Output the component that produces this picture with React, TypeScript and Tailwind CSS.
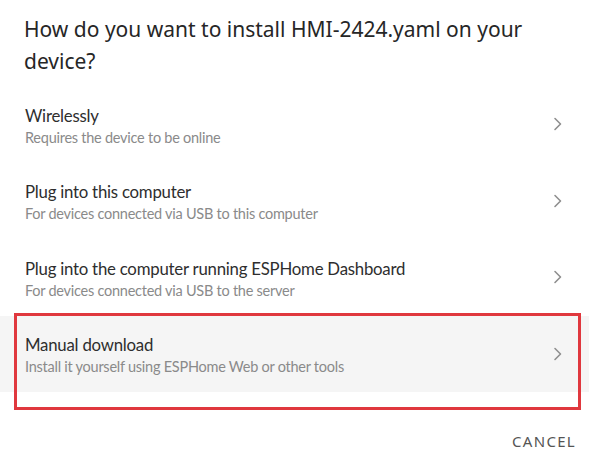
import React from "react";

const rows = [
  { title: "Wirelessly", sub: "Requires the device to be online" },
  { title: "Plug into this computer", sub: "For devices connected via USB to this computer" },
  { title: "Plug into the computer running ESPHome Dashboard", sub: "For devices connected via USB to the server" },
  { title: "Manual download", sub: "Install it yourself using ESPHome Web or other tools", active: true },
];

function Chevron() {
  return (
    <svg width="10" height="14" viewBox="0 0 10 14" className="shrink-0">
      <path d="M2 1.5 L7.5 7 L2 12.5" fill="none" stroke="#8f8f8f" strokeWidth="1.6" strokeLinecap="round" strokeLinejoin="round" />
    </svg>
  );
}

export default function App() {
  return (
    <div
      className="relative w-[589px] h-[468px] bg-white overflow-hidden"
      style={{ fontFamily: '"Noto Sans", "Open Sans", sans-serif' }}
    >
      <h2 className="pl-[24px] pr-[24px] pt-[13px] text-[21px] leading-[32px] text-[#262626] font-normal">
        How do you want to install HMI-2424.yaml on your device?
      </h2>
      <ul className="mt-[9px]" style={{ fontFamily: 'Lato, "Noto Sans", sans-serif' }}>
        {rows.map((r) => (
          <li
            key={r.title}
            className={`flex items-center justify-between h-[76.5px] pl-[25px] pr-[26px] ${r.active ? "bg-[#f5f5f5]" : ""}`}
          >
            <div className="flex flex-col gap-[2px] mt-[3px]">
              <span className="text-[16.8px] leading-[21px] tracking-[-0.23px] text-[#2e2e2e]">{r.title}</span>
              <span className="text-[14.5px] leading-[19px] tracking-[-0.25px] text-[#8a8a8a]">{r.sub}</span>
            </div>
            <Chevron />
          </li>
        ))}
      </ul>
      <div className="flex justify-end pr-[13px] pt-[38px]">
        <span className="text-[15px] tracking-[1.3px] text-[#555555]">CANCEL</span>
      </div>
      <div className="absolute left-[14px] top-[313px] w-[567px] h-[97px] border-[3px] border-[#e0383e]" />
    </div>
  );
}
